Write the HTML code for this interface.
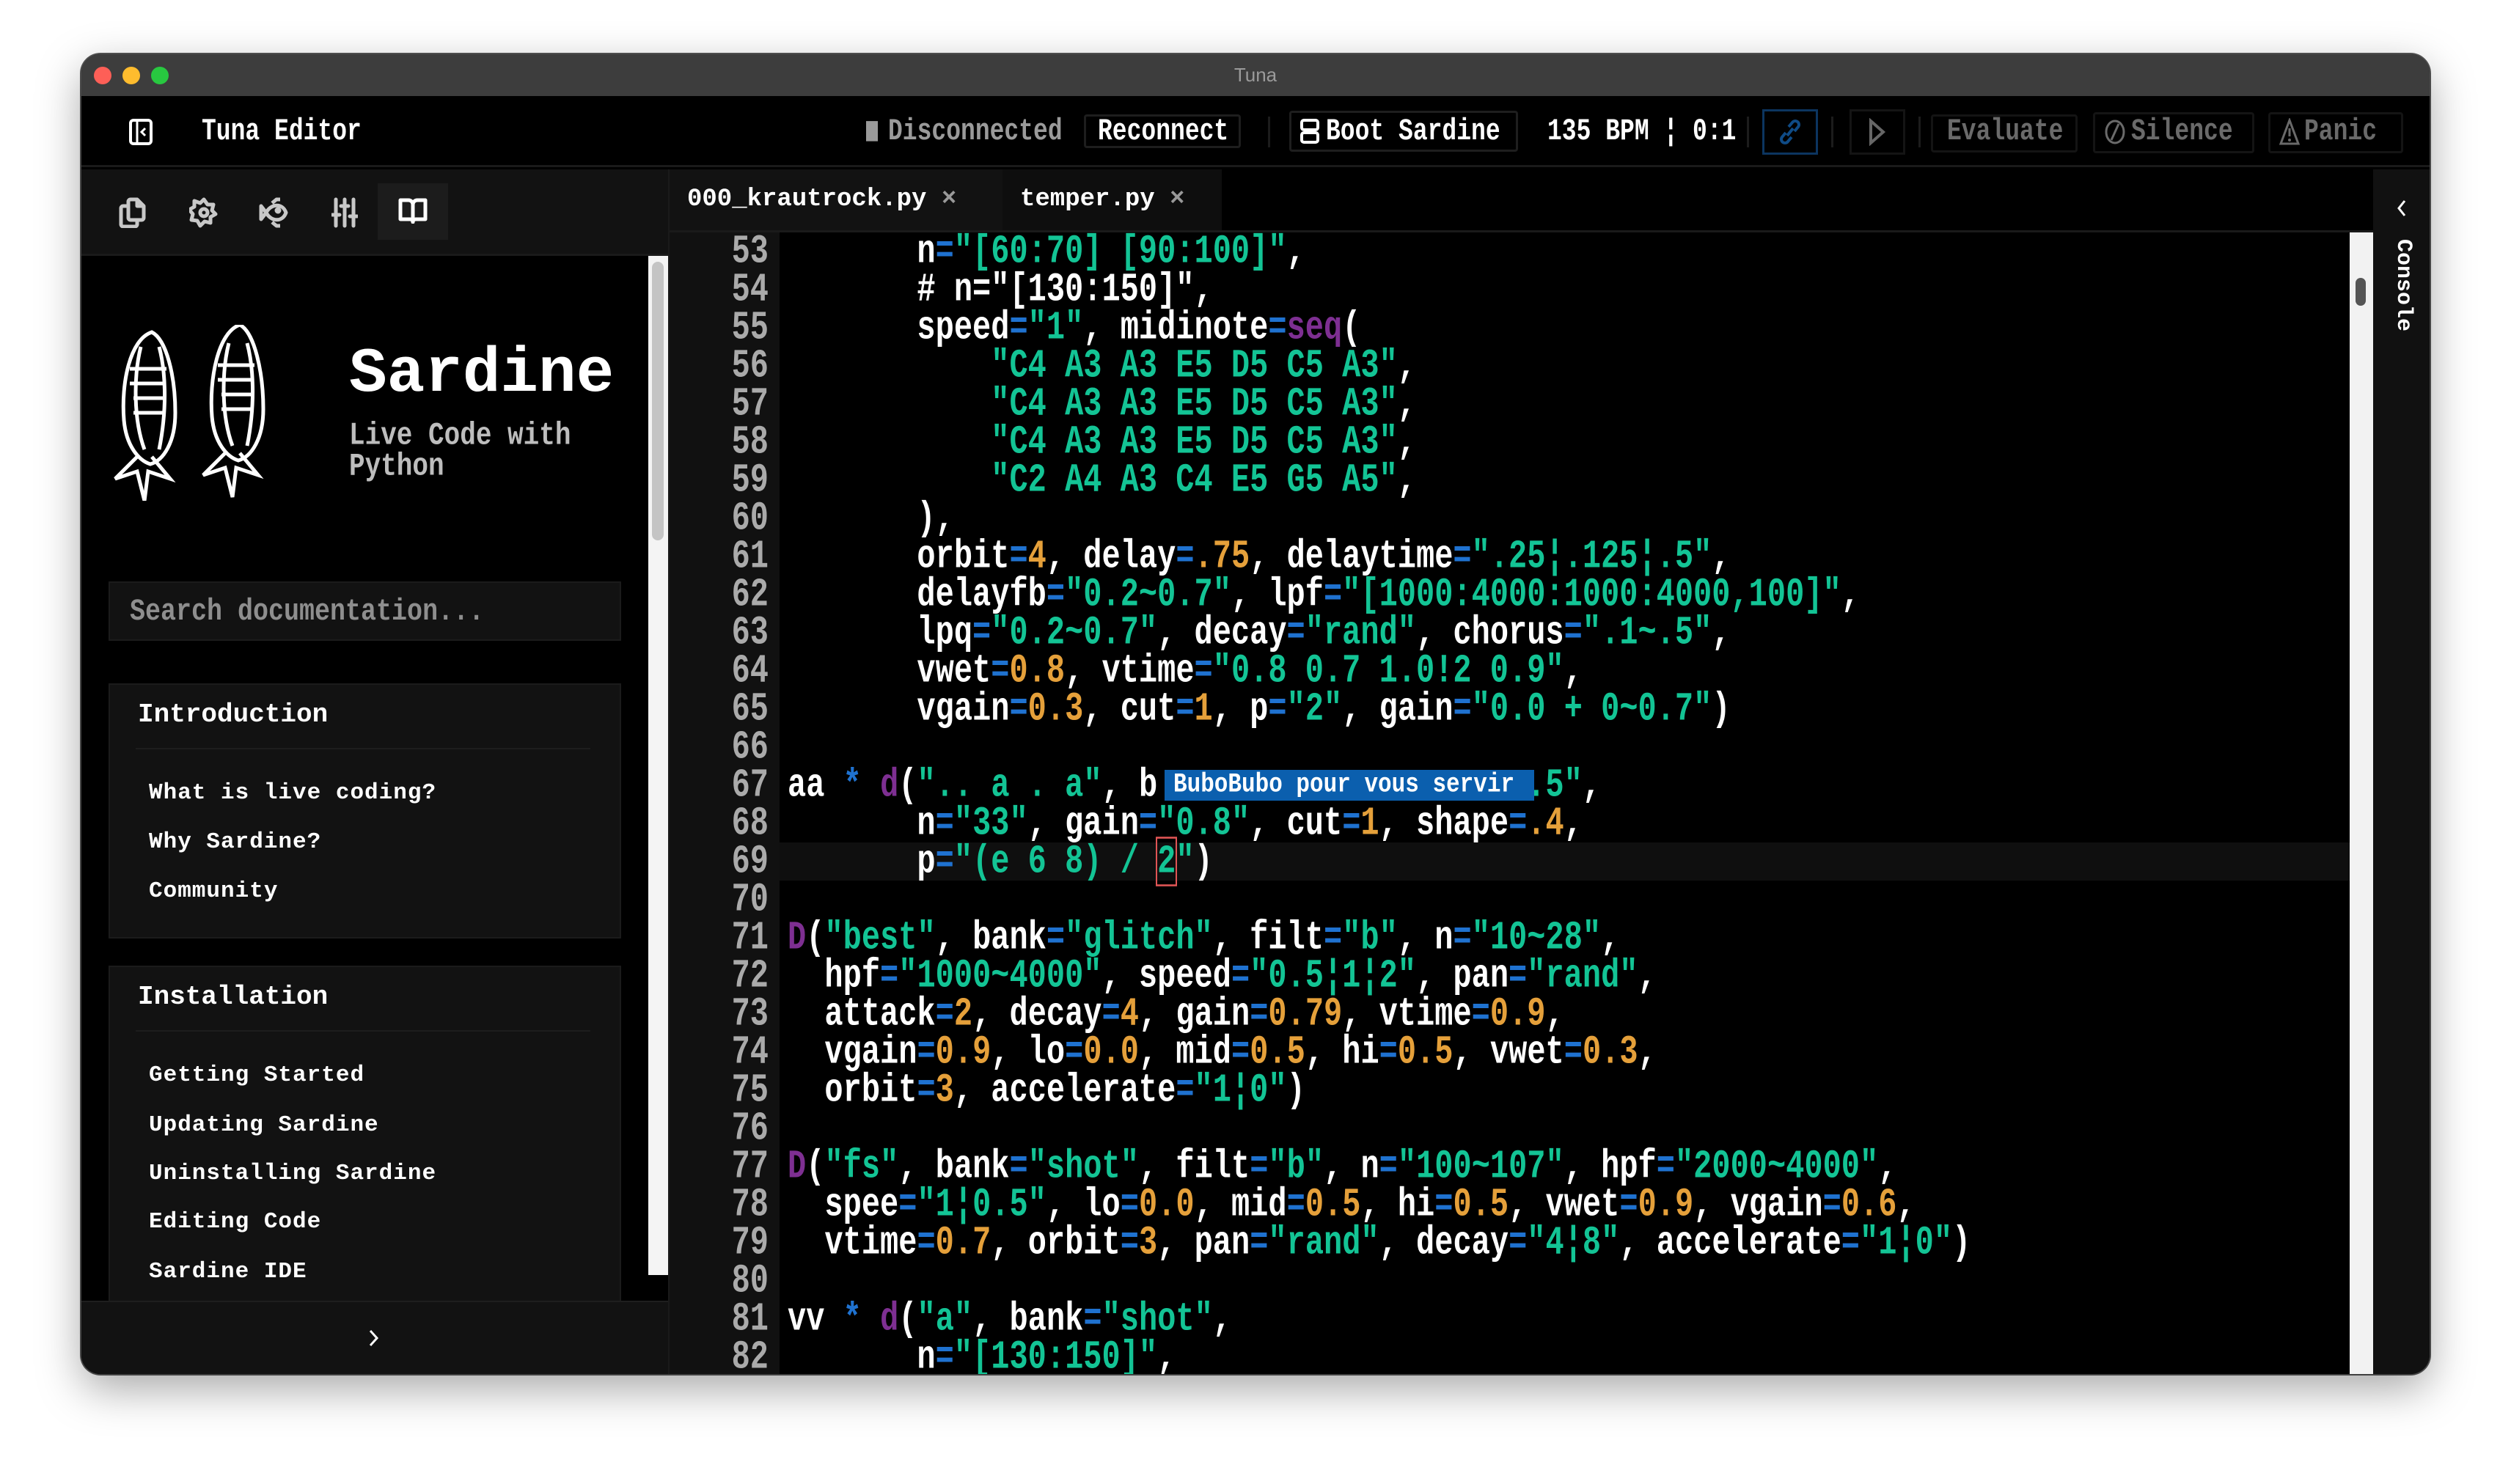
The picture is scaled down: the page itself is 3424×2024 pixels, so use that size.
<!DOCTYPE html>
<html><head><meta charset="utf-8"><style>
*{margin:0;padding:0;box-sizing:border-box}
body{width:3424px;height:2024px;background:#fff;position:relative;overflow:hidden;font-family:"Liberation Mono","DejaVu Sans Mono",monospace;font-weight:bold}
.win{position:absolute;left:111px;top:74px;width:3202px;height:1800px;border-radius:26px;overflow:hidden;background:#000;box-shadow:0 20px 60px rgba(0,0,0,.35),0 0 0 2px #555}
.abs{position:absolute}
.title{left:0;top:0;width:3202px;height:57px;background:#3d3d3d}
.dot{position:absolute;top:17px;width:24px;height:24px;border-radius:50%}
.hdr{left:0;top:57px;width:3202px;height:97px;background:#000;border-bottom:3px solid #1a1a1a}
.ht{position:absolute;top:0;height:97px;line-height:97px;font-size:33px;color:#fff;white-space:pre;transform:scaleY(1.25)}
.btn{position:absolute;border:3px solid #1e1e1e;border-radius:4px}
.tb{left:0;top:157px;width:800px;height:118px;background:#121212;border-bottom:3px solid #1a1a1a}
.tabs{left:802px;top:157px;width:2323px;height:86px;background:#000;border-bottom:3px solid #1a1a1a}
.tab{position:absolute;top:0;height:83px;line-height:83px;font-size:34px;color:#fff;white-space:pre;background:#121212;padding-left:24px}
.side{left:0;top:275px;width:800px;height:1525px;background:#000}
.gut{left:802px;top:243px;width:150px;height:1557px;background:#111}
.code{left:952px;top:243px;width:2141px;height:1557px;background:#000;overflow:hidden}
.ln{position:absolute;left:0;width:135px;text-align:right;font-size:42px;color:#aaa;height:52px;line-height:52px;transform:scaleY(1.3);margin-top:-16px}
.cl{position:absolute;left:11px;font-size:42px;color:#fff;height:52px;line-height:52px;white-space:pre;transform:scaleY(1.3);transform-origin:0 50%;margin-top:-16px}
.s{color:#13c495}.n{color:#e5a03a}.o{color:#1f72d0}.f{color:#7e2f92}
.nav{position:absolute;left:37px;width:699px;background:#121212;border:2px solid #1b1b1b}
.nh{position:absolute;left:38px;font-size:36px;color:#fff;white-space:pre}
.ni{position:absolute;left:53px;font-size:31px;color:#fff;white-space:pre;letter-spacing:1px}
</style></head><body>
<div class="win">
 <div class="abs title">
  <div class="dot" style="left:17px;background:#fe5f57"></div>
  <div class="dot" style="left:56px;background:#febc2e"></div>
  <div class="dot" style="left:95px;background:#28c840"></div>
  <div style="position:absolute;left:0;width:100%;top:0;line-height:57px;text-align:center;font-family:'Liberation Sans',sans-serif;font-weight:normal;font-size:26px;color:#9a9a9a">Tuna</div>
 </div>
 <div class="abs hdr">
  <svg class="abs" style="left:64px;top:30px" width="34" height="38" viewBox="0 0 34 38"><rect x="3" y="3" width="28" height="32" rx="4" fill="none" stroke="#fff" stroke-width="4"/><line x1="12" y1="4" x2="12" y2="34" stroke="#fff" stroke-width="3"/><path d="M23 14l-5 5 5 5" fill="none" stroke="#fff" stroke-width="3"/></svg>
  <div class="ht" style="left:164px">Tuna Editor</div>
  <div class="ht" style="left:1070px;color:#9a9a9a"><span style="display:inline-block;width:16px;height:22px;background:#9a9a9a;vertical-align:middle;margin-right:14px"></span>Disconnected</div>
  <div class="btn" style="left:1367px;top:25px;width:214px;height:46px"></div>
  <div class="ht" style="left:1386px">Reconnect</div>
  <div class="abs" style="left:1618px;top:28px;width:3px;height:42px;background:#1c1c1c"></div>
  <div class="btn" style="left:1647px;top:20px;width:312px;height:56px"></div>
  <svg class="abs" style="left:1662px;top:31px" width="26" height="34" viewBox="0 0 26 34"><rect x="2" y="2" width="22" height="13" rx="3" fill="none" stroke="#fff" stroke-width="4"/><rect x="2" y="19" width="22" height="13" rx="3" fill="none" stroke="#fff" stroke-width="4"/></svg>
  <div class="ht" style="left:1697px">Boot Sardine</div>
  <div class="ht" style="left:1999px">135 BPM ¦ 0:1</div>
  <div class="abs" style="left:2271px;top:28px;width:3px;height:42px;background:#1c1c1c"></div>
  <div class="abs" style="left:2292px;top:18px;width:76px;height:62px;border:3px solid #0c3560"></div>
  <svg class="abs" style="left:2314px;top:30px" width="32" height="38" viewBox="0 0 32 38"><path d="M14 12l5-6a5 5 0 0 1 8 6l-5 6M18 26l-5 6a5 5 0 0 1-8-6l5-6M12 24l8-10" fill="none" stroke="#0f4b86" stroke-width="4"/></svg>
  <div class="abs" style="left:2386px;top:28px;width:3px;height:42px;background:#1c1c1c"></div>
  <div class="abs" style="left:2411px;top:18px;width:76px;height:62px;border:3px solid #141414"></div>
  <svg class="abs" style="left:2435px;top:30px" width="28" height="38" viewBox="0 0 28 38"><path d="M5 4l17 15L5 34z" fill="none" stroke="#666" stroke-width="4"/></svg>
  <div class="abs" style="left:2505px;top:28px;width:3px;height:42px;background:#1c1c1c"></div>
  <div class="btn" style="left:2522px;top:25px;width:200px;height:52px;border-color:#141414"></div>
  <div class="ht" style="left:2544px;color:#6a6a6a">Evaluate</div>
  <div class="btn" style="left:2743px;top:22px;width:220px;height:56px;border-color:#141414"></div>
  <svg class="abs" style="left:2757px;top:30px" width="32" height="38" viewBox="0 0 32 38"><ellipse cx="16" cy="19" rx="12" ry="15" fill="none" stroke="#6a6a6a" stroke-width="3"/><line x1="21" y1="8" x2="11" y2="30" stroke="#6a6a6a" stroke-width="3"/></svg>
  <div class="ht" style="left:2795px;color:#6a6a6a">Silence</div>
  <div class="btn" style="left:2982px;top:22px;width:184px;height:56px;border-color:#141414"></div>
  <svg class="abs" style="left:2996px;top:30px" width="30" height="38" viewBox="0 0 30 38"><path d="M15 3L3 35h24z" fill="none" stroke="#6a6a6a" stroke-width="3"/><line x1="15" y1="14" x2="15" y2="25" stroke="#6a6a6a" stroke-width="3"/><circle cx="15" cy="30" r="2" fill="#6a6a6a"/></svg>
  <div class="ht" style="left:3031px;color:#6a6a6a">Panic</div>
 </div>
 <div class="abs tb">
  <svg class="abs" style="left:50px;top:38px" width="40" height="42" viewBox="0 0 40 42" fill="none" stroke="#c8c8c8" stroke-width="5" stroke-linejoin="round"><path d="M17 3h9l9 9v16a3 3 0 0 1-3 3H17a3 3 0 0 1-3-3V6a3 3 0 0 1 3-3z"/><path d="M26 3v9h9"/><path d="M14 12H7a3 3 0 0 0-3 3v22a3 3 0 0 0 3 3h16a3 3 0 0 0 3-3v-6"/></svg>
  <svg class="abs" style="left:147px;top:38px" width="40" height="42" viewBox="0 0 40 42" fill="none" stroke="#c8c8c8" stroke-width="5" stroke-linejoin="round"><path d="M20 3l5 7 8 0-2 8 5 5-7 4 0 8-8-2-6 6-4-7-8-1 2-8-5-6 7-4 0-8 8 3z"/><circle cx="20" cy="21" r="5"/></svg>
  <svg class="abs" style="left:242px;top:38px" width="40" height="42" viewBox="0 0 40 42" fill="none" stroke="#c8c8c8" stroke-width="5" stroke-linejoin="round"><path d="M10 21c6-12 22-14 27 0-5 14-21 12-27 0zM10 21L3 12v18z"/><circle cx="26" cy="18" r="2" fill="#c8c8c8"/><path d="M18 8l6-5h5M18 34l6 5h5"/></svg>
  <svg class="abs" style="left:341px;top:38px" width="36" height="42" viewBox="0 0 36 42" fill="none" stroke="#c8c8c8" stroke-width="5" stroke-linecap="round"><path d="M6 3v36M18 3v36M30 3v36M1 24h10M13 12h10M25 26h10"/></svg>
  <div class="abs" style="left:404px;top:19px;width:96px;height:77px;background:#1c1c1c"></div>
  <svg class="abs" style="left:432px;top:38px" width="40" height="36" viewBox="0 0 40 36" fill="none" stroke="#fff" stroke-width="5" stroke-linejoin="round"><path d="M3 4h11a6 6 0 0 1 6 6v24a4 4 0 0 0-4-4H3zM37 4H26a6 6 0 0 0-6 6v24a4 4 0 0 1 4-4h13z"/></svg>
 </div>
 <div class="abs tabs">
  <div class="tab" style="left:0;width:454px">000_krautrock.py <span style="color:#999">×</span></div>
  <div class="tab" style="left:454px;width:299px;background:#0e0e0e">temper.py <span style="color:#999">×</span></div>
 </div>
 <div class="abs" style="left:3125px;top:157px;width:77px;height:1643px;background:#111">
  <svg class="abs" style="left:30px;top:40px" width="18" height="26" viewBox="0 0 18 26"><path d="M13 3L5 13l8 10" fill="none" stroke="#fff" stroke-width="3"/></svg>
  <div class="abs" style="left:24px;top:95px;font-size:30px;color:#fff;writing-mode:vertical-rl">Console</div>
 </div>
 <div class="abs side">
  <div class="abs" style="left:773px;top:0;width:27px;height:1390px;background:#f4f4f4"><div style="position:absolute;left:5px;top:8px;width:16px;height:380px;border-radius:8px;background:#c4c4c4"></div></div>
  <svg class="abs" style="left:36px;top:94px" width="260" height="240" viewBox="0 0 260 240" fill="none" stroke="#fff" stroke-width="5">
   <path d="M60 10c-30 10-42 70-38 120 3 35 20 55 36 60 18-5 34-30 34-70 0-50-12-100-32-110z"/>
   <path d="M45 30c-10 40-10 100 5 140M70 30c8 30 12 80 0 140"/>
   <path d="M40 180l-30 30 30-10 10 40 5-40 30 10-25-30"/>
   <path d="M30 60h50M30 80h45M35 100h40M35 120h40"/>
   <path d="M180 0c-30 10-42 75-38 125 3 35 20 55 36 60 18-5 34-30 34-70 0-50-12-105-32-115z"/>
   <path d="M165 25c-10 40-10 100 5 140M190 25c8 30 12 80 0 140"/>
   <path d="M160 175l-30 30 30-10 10 40 5-40 30 10-25-30"/>
   <path d="M150 55h50M150 75h45M155 95h40M155 115h40"/>
  </svg>
  <div class="abs" style="left:365px;top:112px;font-size:86px;color:#fff;font-family:'Liberation Mono',monospace">Sardine</div>
  <div class="abs" style="left:365px;top:224px;font-size:36px;color:#bdbdbd;line-height:35px;transform:scaleY(1.2);transform-origin:0 0">Live Code with<br>Python</div>
  <div class="abs" style="left:37px;top:444px;width:699px;height:81px;background:#121212;border:2px solid #1b1b1b"></div>
  <div class="abs" style="left:66px;top:460px;font-size:35px;color:#8e8e8e;line-height:50px;transform:scaleY(1.2)">Search documentation...</div>
  <div class="nav" style="top:583px;height:348px">
   <div class="nh" style="top:20px">Introduction</div>
   <div class="abs" style="left:35px;top:86px;width:620px;height:2px;background:#1d1d1d"></div>
   <div class="ni" style="top:130px">What is live coding?</div>
   <div class="ni" style="top:197px">Why Sardine?</div>
   <div class="ni" style="top:264px">Community</div>
  </div>
  <div class="nav" style="top:968px;height:470px">
   <div class="nh" style="top:20px">Installation</div>
   <div class="abs" style="left:35px;top:86px;width:620px;height:2px;background:#1d1d1d"></div>
   <div class="ni" style="top:130px">Getting Started</div>
   <div class="ni" style="top:198px">Updating Sardine</div>
   <div class="ni" style="top:264px">Uninstalling Sardine</div>
   <div class="ni" style="top:330px">Editing Code</div>
   <div class="ni" style="top:398px">Sardine IDE</div>
  </div>
  <div class="abs" style="left:0;top:1425px;width:800px;height:100px;background:#121212;border-top:2px solid #1e1e1e">
   <svg class="abs" style="left:390px;top:36px" width="18" height="26" viewBox="0 0 18 26"><path d="M4 3l9 10-9 10" fill="none" stroke="#fff" stroke-width="3"/></svg>
  </div>
 </div>
 <div class="abs" style="left:800px;top:157px;width:2px;height:1643px;background:#1a1a1a"></div>
 <div class="abs gut">
  <div class="ln" style="top:16px">53</div><div class="ln" style="top:68px">54</div><div class="ln" style="top:120px">55</div><div class="ln" style="top:172px">56</div><div class="ln" style="top:224px">57</div><div class="ln" style="top:276px">58</div><div class="ln" style="top:328px">59</div><div class="ln" style="top:380px">60</div><div class="ln" style="top:432px">61</div><div class="ln" style="top:484px">62</div><div class="ln" style="top:536px">63</div><div class="ln" style="top:588px">64</div><div class="ln" style="top:640px">65</div><div class="ln" style="top:692px">66</div><div class="ln" style="top:744px">67</div><div class="ln" style="top:796px">68</div><div class="ln" style="top:848px">69</div><div class="ln" style="top:900px">70</div><div class="ln" style="top:952px">71</div><div class="ln" style="top:1004px">72</div><div class="ln" style="top:1056px">73</div><div class="ln" style="top:1108px">74</div><div class="ln" style="top:1160px">75</div><div class="ln" style="top:1212px">76</div><div class="ln" style="top:1264px">77</div><div class="ln" style="top:1316px">78</div><div class="ln" style="top:1368px">79</div><div class="ln" style="top:1420px">80</div><div class="ln" style="top:1472px">81</div><div class="ln" style="top:1524px">82</div>
 </div>
 <div class="abs code">
  <div class="abs" style="left:0;top:832px;width:2141px;height:52px;background:#0f0f0f"></div>
  <div class="cl" style="top:16px">       n<span class="o">=</span><span class="s">"[60:70] [90:100]"</span>,</div>
  <div class="cl" style="top:68px">       # n="[130:150]",</div>
  <div class="cl" style="top:120px">       speed<span class="o">=</span><span class="s">"1"</span>, midinote<span class="o">=</span><span class="f">seq</span>(</div>
  <div class="cl" style="top:172px">           <span class="s">"C4 A3 A3 E5 D5 C5 A3"</span>,</div>
  <div class="cl" style="top:224px">           <span class="s">"C4 A3 A3 E5 D5 C5 A3"</span>,</div>
  <div class="cl" style="top:276px">           <span class="s">"C4 A3 A3 E5 D5 C5 A3"</span>,</div>
  <div class="cl" style="top:328px">           <span class="s">"C2 A4 A3 C4 E5 G5 A5"</span>,</div>
  <div class="cl" style="top:380px">       ),</div>
  <div class="cl" style="top:432px">       orbit<span class="o">=</span><span class="n">4</span>, delay<span class="o">=</span><span class="n">.75</span>, delaytime<span class="o">=</span><span class="s">".25¦.125¦.5"</span>,</div>
  <div class="cl" style="top:484px">       delayfb<span class="o">=</span><span class="s">"0.2~0.7"</span>, lpf<span class="o">=</span><span class="s">"[1000:4000:1000:4000,100]"</span>,</div>
  <div class="cl" style="top:536px">       lpq<span class="o">=</span><span class="s">"0.2~0.7"</span>, decay<span class="o">=</span><span class="s">"rand"</span>, chorus<span class="o">=</span><span class="s">".1~.5"</span>,</div>
  <div class="cl" style="top:588px">       vwet<span class="o">=</span><span class="n">0.8</span>, vtime<span class="o">=</span><span class="s">"0.8 0.7 1.0!2 0.9"</span>,</div>
  <div class="cl" style="top:640px">       vgain<span class="o">=</span><span class="n">0.3</span>, cut<span class="o">=</span><span class="n">1</span>, p<span class="o">=</span><span class="s">"2"</span>, gain<span class="o">=</span><span class="s">"0.0 + 0~0.7"</span>)</div>
  <div class="cl" style="top:744px">aa <span class="o">*</span> <span class="f">d</span>(<span class="s">".. a . a"</span>, b<span style="display:inline-block;width:504px"></span><span class="s">.5"</span>,</div>
  <div class="abs" style="left:525px;top:733px;width:504px;height:42px;background:#0b5fae"></div>
  <div class="abs" style="left:537px;top:733px;font-size:31px;line-height:42px;color:#fff;white-space:pre;transform:scaleY(1.2)">BuboBubo pour vous servir</div>
  <div class="cl" style="top:796px">       n<span class="o">=</span><span class="s">"33"</span>, gain<span class="o">=</span><span class="s">"0.8"</span>, cut<span class="o">=</span><span class="n">1</span>, shape<span class="o">=</span><span class="n">.4</span>,</div>
  <div class="cl" style="top:848px">       p<span class="o">=</span><span class="s">"(e 6 8) / <span style="outline:2px solid #e05555">2</span>"</span>)</div>
  <div class="cl" style="top:952px"><span class="f">D</span>(<span class="s">"best"</span>, bank<span class="o">=</span><span class="s">"glitch"</span>, filt<span class="o">=</span><span class="s">"b"</span>, n<span class="o">=</span><span class="s">"10~28"</span>,</div>
  <div class="cl" style="top:1004px">  hpf<span class="o">=</span><span class="s">"1000~4000"</span>, speed<span class="o">=</span><span class="s">"0.5¦1¦2"</span>, pan<span class="o">=</span><span class="s">"rand"</span>,</div>
  <div class="cl" style="top:1056px">  attack<span class="o">=</span><span class="n">2</span>, decay<span class="o">=</span><span class="n">4</span>, gain<span class="o">=</span><span class="n">0.79</span>, vtime<span class="o">=</span><span class="n">0.9</span>,</div>
  <div class="cl" style="top:1108px">  vgain<span class="o">=</span><span class="n">0.9</span>, lo<span class="o">=</span><span class="n">0.0</span>, mid<span class="o">=</span><span class="n">0.5</span>, hi<span class="o">=</span><span class="n">0.5</span>, vwet<span class="o">=</span><span class="n">0.3</span>,</div>
  <div class="cl" style="top:1160px">  orbit<span class="o">=</span><span class="n">3</span>, accelerate<span class="o">=</span><span class="s">"1¦0"</span>)</div>
  <div class="cl" style="top:1264px"><span class="f">D</span>(<span class="s">"fs"</span>, bank<span class="o">=</span><span class="s">"shot"</span>, filt<span class="o">=</span><span class="s">"b"</span>, n<span class="o">=</span><span class="s">"100~107"</span>, hpf<span class="o">=</span><span class="s">"2000~4000"</span>,</div>
  <div class="cl" style="top:1316px">  spee<span class="o">=</span><span class="s">"1¦0.5"</span>, lo<span class="o">=</span><span class="n">0.0</span>, mid<span class="o">=</span><span class="n">0.5</span>, hi<span class="o">=</span><span class="n">0.5</span>, vwet<span class="o">=</span><span class="n">0.9</span>, vgain<span class="o">=</span><span class="n">0.6</span>,</div>
  <div class="cl" style="top:1368px">  vtime<span class="o">=</span><span class="n">0.7</span>, orbit<span class="o">=</span><span class="n">3</span>, pan<span class="o">=</span><span class="s">"rand"</span>, decay<span class="o">=</span><span class="s">"4¦8"</span>, accelerate<span class="o">=</span><span class="s">"1¦0"</span>)</div>
  <div class="cl" style="top:1472px">vv <span class="o">*</span> <span class="f">d</span>(<span class="s">"a"</span>, bank<span class="o">=</span><span class="s">"shot"</span>,</div>
  <div class="cl" style="top:1524px">       n<span class="o">=</span><span class="s">"[130:150]"</span>,</div>
 </div>
 <div class="abs" style="left:3093px;top:243px;width:32px;height:1557px;background:#f2f2f2"><div style="position:absolute;left:8px;top:62px;width:14px;height:38px;border-radius:7px;background:#555"></div></div>
</div>
</body></html>
